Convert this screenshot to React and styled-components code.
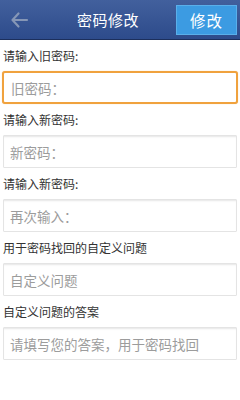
import styled, { createGlobalStyle } from "styled-components"

const GlobalStyle = createGlobalStyle`
  html, body {
    margin: 0;
    padding: 0;
    background: #ffffff;
    font-family: "Noto Sans CJK SC", "Liberation Sans", sans-serif;
  }
`

const Page = styled.div`
  width: 240px;
  height: 400px;
  background: #ffffff;
  overflow: hidden;
`

const Header = styled.div`
  display: flex;
  align-items: center;
  height: 40px;
  background: linear-gradient(#42609d, #2d4b8b);
  border-bottom: 1px solid #1c2f5c;
  box-sizing: border-box;
  padding-right: 3px;
`

const BackButton = styled.div`
  width: 40px;
  height: 40px;
  display: flex;
  align-items: center;
  justify-content: center;
`

const Title = styled.div`
  flex: 1;
  text-align: center;
  color: #ffffff;
  font-size: 15px;
  letter-spacing: 0.5px;
`

const ActionButton = styled.div`
  width: 61px;
  height: 30px;
  box-sizing: border-box;
  display: flex;
  align-items: center;
  justify-content: center;
  background: #3c9be2;
  border: 1px solid #5aafea;
  color: #ffffff;
  font-size: 15.5px;
  letter-spacing: 1px;
`

const Form = styled.div`
  display: flex;
  flex-direction: column;
`

const Label = styled.div`
  height: 31px;
  display: flex;
  align-items: center;
  padding: 0 0 0 3px;
  font-size: 12px;
  color: #333333;
`

const Field = styled.div`
  height: 33px;
  margin: 0 ${(p) => (p.focused ? "2px" : "3px")};
  box-sizing: border-box;
  display: flex;
  align-items: center;
  padding-left: ${(p) => (p.focused ? "7px" : "6px")};
  font-size: 13.5px;
  color: #9c9c9c;
  background: #ffffff;
  border: ${(p) => (p.focused ? "2px solid #f0a23e" : "1px solid #e4e4e4")};
  border-radius: ${(p) => (p.focused ? "3px" : "1px")};
  box-shadow: ${(p) =>
    p.focused ? "0 0 1px #f6c98a" : "inset 0 2px 2px -1px #e6e6e6"};
`

const fields = [
  { label: "请输入旧密码:", placeholder: "旧密码：", focused: true },
  { label: "请输入新密码:", placeholder: "新密码：" },
  { label: "请输入新密码:", placeholder: "再次输入：" },
  { label: "用于密码找回的自定义问题", placeholder: "自定义问题" },
  { label: "自定义问题的答案", placeholder: "请填写您的答案，用于密码找回" },
]

const BackArrow = () => (
  <svg width="20" height="20" viewBox="0 0 20 20">
    <path
      d="M8.5 3.5 L2.5 10 L8.5 16.5 M3 10 L17 10"
      fill="none"
      stroke="#8596b6"
      strokeWidth="2.2"
      strokeLinecap="round"
      strokeLinejoin="round"
    />
  </svg>
)

const App = () => {
  return (
    <Page>
      <GlobalStyle />
      <Header>
        <BackButton>
          <BackArrow />
        </BackButton>
        <Title>密码修改</Title>
        <ActionButton>修改</ActionButton>
      </Header>
      <Form>
        {fields.map((f, i) => (
          <div key={i}>
            <Label>{f.label}</Label>
            <Field focused={f.focused}>{f.placeholder}</Field>
          </div>
        ))}
      </Form>
    </Page>
  )
}

export default App
